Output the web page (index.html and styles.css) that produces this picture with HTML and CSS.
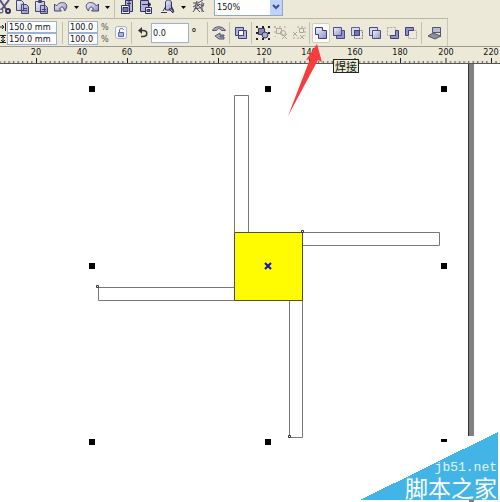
FILE: index.html
```html
<!DOCTYPE html>
<html lang="zh-CN">
<head>
<meta charset="utf-8">
<title>Drawing</title>
<link rel="stylesheet" href="styles.css">
</head>
<body>
<svg class="defs" aria-hidden="true">
  <defs>
    <linearGradient id="lav" x1="0" y1="0" x2="1" y2="1"><stop offset="0" stop-color="#f4f4fc"/><stop offset="1" stop-color="#8f8fca"/></linearGradient>
    <pattern id="ticks" x="36" y="0" width="45.5" height="17" patternUnits="userSpaceOnUse">
      <path d="M.5 11v6" stroke="#222"/>
      <path d="M5 14v3M9.6 14v3M14.1 14v3M18.7 14v3M23.2 14v3M27.8 14v3M32.3 14v3M36.9 14v3M41.4 14v3" stroke="#444"/>
    </pattern>
  </defs>
</svg>

<header class="bars">
  <div class="bar bar-main">
    <button class="tool" aria-label="Cut"><svg viewBox="0 0 16 16"><path d="M4 1l6 9M13 1L6 10" stroke="#55557f" stroke-width="2"/><circle cx="5" cy="12" r="2" fill="none" stroke="#33335c"/><circle cx="12" cy="12" r="2" fill="none" stroke="#33335c" stroke-width="2"/></svg></button>
    <button class="tool" aria-label="Copy"><svg viewBox="0 0 16 16" stroke="#44446c" fill="url(#lav)"><path d="M1.500 1.500h5l2 2v8h-7zM6.500 5.500h5l2 2v7h-7z"/><path d="M8 9.500h4M8 11.500h4"/></svg></button>
    <button class="tool" aria-label="Paste"><svg viewBox="0 0 16 16" stroke="#44446c" fill="url(#lav)"><path d="M1.500 2.500h9v10h-9zM4.500 1.500h3v2h-3zM6.500 6.500h5l2 2v6h-7z"/><path d="M8 10.500h4M8 12.500h4"/></svg></button>
    <button class="tool" aria-label="Undo"><svg viewBox="0 0 16 16"><path d="M1.500 5v7h7l-2-2c2-3 4-3 5 2 3-3 3-7 0-8-3-1-6 0-8 3z" fill="url(#lav)" stroke="#44446c"/></svg></button>
    <button class="drop" aria-label="Undo list"><svg viewBox="0 0 5 3"><path d="M0 0h5L2.500 3z"/></svg></button>
    <button class="tool" aria-label="Redo"><svg viewBox="0 0 16 16"><path d="M14.500 5v7h-7l2-2c-2-3-4-3-5 2-3-3-3-7 0-8 3-1 6 0 8 3z" fill="url(#lav)" stroke="#44446c"/></svg></button>
    <button class="drop" aria-label="Redo list"><svg viewBox="0 0 5 3"><path d="M0 0h5L2.500 3z"/></svg></button>
    <span class="sep"></span>
    <button class="tool" aria-label="Import"><svg viewBox="0 0 16 16" stroke="#33335c"><path d="M6.500 1.500h7v11h-7z" fill="#b4b4dc"/><path d="M2.500 6.500h8v8h-8z" fill="#eef"/><path d="M4 8.500h5v4H4z" fill="#77a"/><path d="M8 4.500h4M10 2v6"/></svg></button>
    <button class="tool" aria-label="Export"><svg viewBox="0 0 16 16" stroke="#33335c"><path d="M2.500 1.500h8v11h-8z" fill="#b4b4dc"/><path d="M7.500 8.500h6v6h-6z" fill="#eef"/><path d="M9 10.500h3v2H9z" fill="#77a"/><path d="M4 5.500h8M10 3l3 2.500L10 8"/></svg></button>
    <button class="tool launcher" aria-label="Application launcher"><svg viewBox="0 0 16 16" stroke="#33335c" fill="url(#lav)"><path d="M5.500 11V4c0-4 6-4 6 0v7z"/><path d="M1 13.500h6M3 12l3-5M11 6l3 7M9 10h4v4z"/></svg></button>
    <button class="drop" aria-label="Launcher list"><svg viewBox="0 0 5 3"><path d="M0 0h5L2.500 3z"/></svg></button>
    <button class="tool" aria-label="Online community"><svg viewBox="0 0 16 16" fill="none" stroke="#4c4c66"><path d="M2 4h5l5-3M2 8l5-3 6 2M2 13l5-7 6 7M3 10c4-1 8 0 10-6M6 2l-2 6 5 5M11 3v10"/></svg></button>
    <label class="zoom"><select aria-label="Zoom level"><option>150%</option></select><span class="zoom-arrow"><svg viewBox="0 0 8 6"><path d="M1 1l3 3 3-3" fill="none" stroke="#33558c" stroke-width="2"/></svg></span></label>
  </div>

  <div class="bar bar-props">
    <div class="size-icons" aria-hidden="true"><svg viewBox="0 0 6 10"><path d="M0 5h4M2 3l2 2-2 2M5.500 1v8" fill="none" stroke="#222"/></svg><svg viewBox="0 0 6 10"><path d="M0 1.500h6M0 8.500h6M3 2v6M1 4l2-2 2 2M1 6l2 2 2-2" fill="none" stroke="#222"/></svg></div>
    <div class="stack sizes"><input aria-label="Width" value="150.0 mm"><input aria-label="Height" value="150.0 mm"></div>
    <span class="sep"></span>
    <div class="stack scales"><input aria-label="Horizontal scale" value="100.0"><input aria-label="Vertical scale" value="100.0"></div>
    <div class="percents"><span>%</span><span>%</span></div>
    <button class="tool" aria-label="Lock ratio"><svg viewBox="0 0 16 16"><rect x="2.500" y="1.500" width="11" height="12" rx="2" fill="#f5f5fb" stroke="#a6b3d0"/><path d="M5.500 7.500h5v4h-5z" fill="#a9b4da" stroke="#56669c"/><path d="M6.500 7V5c0-2 4-2 4 0" fill="none" stroke="#56669c"/></svg></button>
    <span class="sep"></span>
    <label class="angle"><svg viewBox="0 0 12 12" aria-hidden="true"><path d="M3 3.500h3c5 0 5 6 0 6H4" fill="none" stroke="#333" stroke-width="1.500"/><path d="M1 3.500L5 0v7z" fill="#333"/></svg><input aria-label="Rotation angle" value="0.0"><span>°</span></label>
    <span class="sep"></span>
    <button class="tool" aria-label="Mirror"><svg viewBox="0 0 16 16" stroke="#55556e" fill="#aaaac6"><path d="M1.500 5.500c2-5 10-5 13 0h-4c-2-3-4-2-5 0z"/><path d="M4 11l5-3v2h4v1H9v1h4v2H8z"/></svg></button>
    <span class="sep"></span>
    <button class="tool" aria-label="Combine"><svg viewBox="0 0 16 16"><path d="M2.500 2.500h8v8h-8zM5.500 5.500h8v8h-8z" fill="#b2b2de" stroke="#3f3f78"/><path d="M5.500 5.500h5v5h-5z" fill="#fff" stroke="#3f3f78"/></svg></button>
    <span class="sep"></span>
    <button class="tool" aria-label="Group"><svg viewBox="0 0 16 16"><path d="M3.500 3.500h6v6h-6z" fill="#8888b0" stroke="#333360"/><circle cx="10" cy="10" r="3" fill="#aaaad0" stroke="#333360"/><path d="M1 1h2v2H1zM7 1h2v2H7zM13 1h2v2h-2zM1 7h2v2H1zM13 7h2v2h-2zM1 13h2v2H1zM7 13h2v2H7zM13 13h2v2h-2z" fill="#222"/></svg></button>
    <button class="tool" aria-label="Ungroup" disabled><svg viewBox="0 0 16 16" fill="none" stroke="#a9a79e"><path d="M3.500 3.500h5v5h-5zM9 9l5 5M14 9l-5 5"/><circle cx="10" cy="8" r="2.500"/><path d="M1 2h13M2 1v11" stroke-dasharray="2 3"/></svg></button>
    <button class="tool" aria-label="Ungroup all" disabled><svg viewBox="0 0 16 16" fill="none" stroke="#a9a79e"><path d="M8.500 3.500h4v4h-4zM9 10l4 4M13 10l-4 4M2 7l4 4M6 7l-4 4"/><path d="M6 2h8M14 2v9M2 13h6" stroke-dasharray="2 2"/></svg></button>
    <span class="sep"></span>
    <button class="tool hot" aria-label="焊接" aria-describedby="tip"><svg viewBox="0 0 16 16"><path d="M2.500 2.500h7v3h4v8h-8v-4h-3z" fill="url(#lav)" stroke="#3f3f78"/></svg></button>
    <button class="tool" aria-label="Trim"><svg viewBox="0 0 16 16" stroke="#4b4b84"><path d="M5.500 5.500h8v8h-8z" fill="#9292c4"/><path d="M2.500 2.500h8v8h-8z" fill="url(#lav)"/></svg></button>
    <button class="tool" aria-label="Intersect"><svg viewBox="0 0 16 16"><path d="M2.500 2.500h8v8h-8z" fill="#d9d9ee" stroke="#66668c"/><path d="M5.500 5.500h8v8h-8z" fill="none" stroke="#77778c" stroke-dasharray="2 1"/><path d="M5.500 5.500h5v5h-5z" fill="#7777b2" stroke="#3f3f78"/></svg></button>
    <button class="tool" aria-label="Simplify"><svg viewBox="0 0 16 16" stroke="#4b4b84"><path d="M2.500 2.500h8v8h-8z" fill="#d8d8ef"/><path d="M5.500 5.500h8v8h-8z" fill="url(#lav)"/></svg></button>
    <button class="tool" aria-label="Front minus back"><svg viewBox="0 0 16 16"><path d="M2.500 2.500h8v8h-8z" fill="none" stroke="#aaa" stroke-dasharray="2 1"/><path d="M10.500 5.500h3v8h-8v-3h5z" fill="#9292ca" stroke="#3f3f78"/></svg></button>
    <button class="tool" aria-label="Back minus front"><svg viewBox="0 0 16 16"><path d="M5.500 5.500h8v8h-8z" fill="none" stroke="#aaa" stroke-dasharray="2 1"/><path d="M2.500 2.500h8v3h-5v5h-3z" fill="#9292ca" stroke="#3f3f78"/></svg></button>
    <span class="sep"></span>
    <button class="tool last" aria-label="Convert to curves"><svg viewBox="0 0 16 16" stroke="#555566"><path d="M5.500 2.500h8v5h-8z" fill="#b9b9da"/><path d="M1 11l5-3 8 3-6 3z" fill="#8f8fa8"/><path d="M13.500 7v5"/></svg></button>
  </div>
</header>

<div class="ruler">
  <svg aria-label="Horizontal ruler">
    <rect width="100%" height="17" fill="url(#ticks)"/>
    <g class="ruler-labels">
      <text x="36" y="8">20</text><text x="82" y="8">40</text><text x="127" y="8">60</text><text x="173" y="8">80</text><text x="218" y="8">100</text><text x="264" y="8">120</text><text x="309" y="8">140</text><text x="355" y="8">160</text><text x="400" y="8">180</text><text x="446" y="8">200</text><text x="491" y="8">220</text>
    </g>
  </svg>
</div>

<main class="canvas">
  <svg class="artwork" aria-label="Drawing page">
    <path d="M468.500 0v372" stroke="#333"/>
    <path d="M471.500 0v372M471.500 436v40" stroke="#808080" stroke-width="5"/>
    <g fill="none" stroke="#777">
      <path d="M234.500 31.500h14v137h-14z"/>
      <path d="M302.500 168.500h137v13h-137z"/>
      <path d="M98.500 223.500h136v13h-136z"/>
      <path d="M289.500 236.500h13v137h-13z"/>
    </g>
    <path d="M234.500 168.500h68v68h-68z" fill="#fffb00" stroke="#55501a"/>
    <path d="M265 199l6 6M271 199l-6 6" stroke="#1010c8" stroke-width="2"/>
    <g fill="#fff" stroke="#333"><path d="M301.500 166.500h2v2h-2zM96.500 221.500h2v2h-2zM288.500 371.500h2v2h-2z"/></g>
    <path d="M89 22h6v6h-6zM265 22h6v6h-6zM441 22h6v6h-6zM89 199h6v6h-6zM441 199h6v6h-6zM89 375h6v6h-6zM265 375h6v6h-6zM441 375h6v3h-6z"/>
  </svg>
  <svg class="pointer" viewBox="0 0 36 74" aria-hidden="true"><path d="M30 1l5 18-4-2L1 73l22-57-4 1z" fill="#f73c3e"/></svg>
  <div class="tooltip" id="tip" role="tooltip">焊接</div>
  <div class="watermark"><span class="site">jb51.net</span><span class="name">脚本之家</span></div>
</main>
</body>
</html>
```
FILE: styles.css
```css
* { box-sizing: border-box; }

body {
  margin: 0;
  min-height: 100vh;
  display: flex;
  flex-direction: column;
  overflow: hidden;
  background: #fff;
  color: #111;
  font: 9px/12px "DejaVu Sans Condensed", "DejaVu Sans", sans-serif;
}

.defs { position: absolute; width: 0; height: 0; }

.bars { background: #ece9d8; }

.bar { display: flex; align-items: center; overflow: hidden; }

.bar-main {
  width: 290px;
  height: 18px;
  padding-bottom: 4px;
  margin-left: -6px;
}

.bar-main .tool { width: 19px; }

.bar-props {
  width: 448px;
  height: 28px;
  border-top: 1px solid #b9b6a4;
  border-right: 1px solid #c9c6b5;
}

.tool, .drop {
  display: flex;
  align-items: center;
  justify-content: center;
  flex: none;
  width: 18px;
  height: 20px;
  padding: 0;
  border: 0;
  background: none;
}

.tool svg { flex: none; width: 16px; height: 16px; }
.drop { width: 12px; }
.drop svg { width: 5px; height: 3px; }
.launcher { margin-left: 3px; }
.last { margin-left: 2px; }

.hot {
  border: 1px solid #d0cdc0;
  border-radius: 2px;
  background: #fbfbf8;
}

.sep {
  flex: none;
  width: 1px;
  height: 22px;
  margin: 0 2px 0 1px;
  background: #c2bfae;
}

.zoom {
  display: flex;
  flex: none;
  width: 69px;
  height: 18px;
  margin-left: 6px;
  border: 1px solid #8fa8c8;
  background: #fff;
}

.zoom select {
  flex: 1;
  min-width: 0;
  padding: 0 2px;
  border: 0;
  appearance: none;
  background: #fff;
  color: #111;
  font: inherit;
}

.zoom-arrow {
  display: flex;
  align-items: center;
  justify-content: center;
  width: 12px;
  background: #c1d3fb;
}

.zoom-arrow svg { width: 8px; height: 6px; }

.size-icons { display: flex; flex-direction: column; gap: 2px; width: 7px; }
.size-icons svg { width: 6px; height: 10px; }

.stack { display: flex; flex: none; flex-direction: column; }

.bar-props input {
  width: 100%;
  height: 12px;
  padding: 0 1px;
  border: 1px solid #9db2cc;
  background: #fff;
  color: #111;
  font: inherit;
  line-height: 10px;
}

.sizes { width: 50px; margin-right: 4px; }
.scales { width: 30px; margin-left: 3px; }

.percents {
  display: flex;
  flex-direction: column;
  width: 14px;
  padding-left: 3px;
  color: #555;
}

.angle { display: flex; align-items: center; width: 72px; padding-left: 3px; }
.angle svg { flex: none; width: 12px; height: 12px; margin-right: 2px; }
.angle input { width: 38px; height: 20px; }
.angle span { padding-left: 2px; font-size: 13px; }

.ruler {
  height: 18px;
  border-top: 1px solid #9c9a8c;
  border-bottom: 1px solid #555;
  background: #ece9d8;
}

.ruler svg { display: block; width: 100%; height: 16px; }
.ruler-labels { font: 9px "DejaVu Sans Condensed", "DejaVu Sans", sans-serif; text-anchor: middle; fill: #111; }

.canvas { position: relative; flex: 1; min-height: 438px; }
.artwork { position: absolute; width: 100%; height: 100%; }

.pointer { position: absolute; left: 287px; top: -21px; width: 36px; height: 74px; }

.tooltip {
  position: absolute;
  left: 333px;
  top: -5px;
  padding: 0 1px;
  border: 1px solid #222;
  background: #eeeed2;
  font: 11px/12px "Noto Sans CJK SC", sans-serif;
}

.watermark {
  position: absolute;
  right: 2px;
  bottom: 2px;
  display: flex;
  flex-direction: column;
  align-items: flex-end;
  width: 138px;
  height: 68px;
  padding: 29px 1px 0 0;
  background: linear-gradient(to bottom right, transparent 50%, #42b4e6 50%);
  color: #fff;
}

.site { color: #e2f5ff; font: 13px/14px "Liberation Mono", monospace; }
.name { font: 23px/24px "Noto Sans CJK SC", sans-serif; }
```
